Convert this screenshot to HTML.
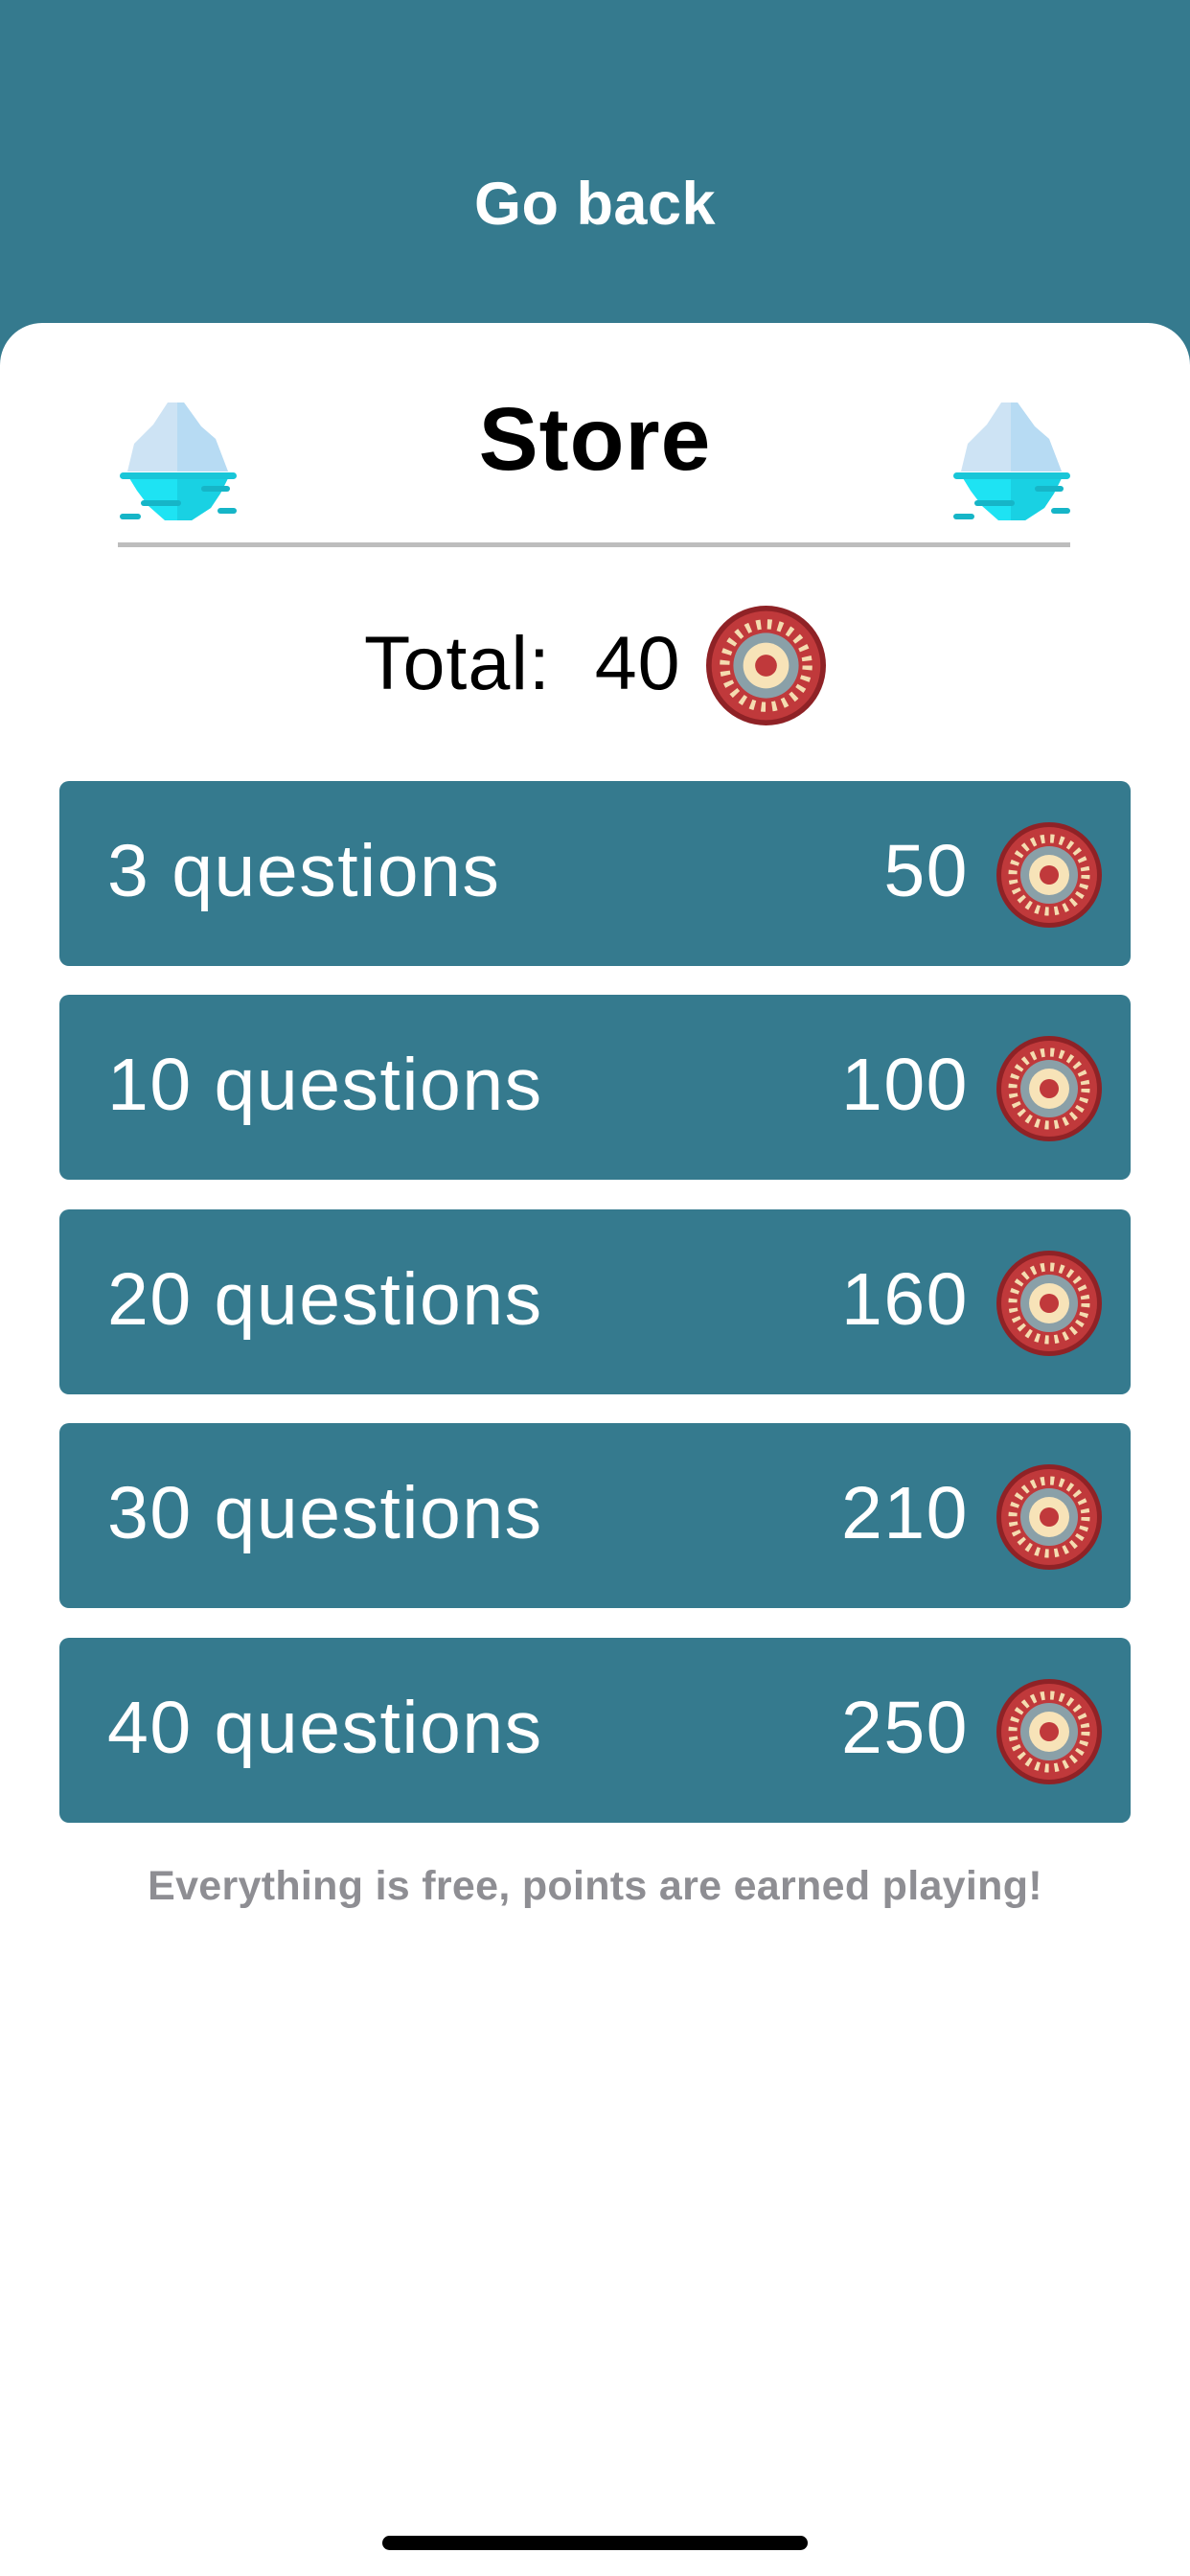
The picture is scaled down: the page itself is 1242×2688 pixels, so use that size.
<!DOCTYPE html>
<html><head><meta charset="utf-8"><style>
*{margin:0;padding:0;box-sizing:border-box}
body{width:1242px;height:2688px;background:#357a8e;position:relative;overflow:hidden;font-family:"Liberation Sans",sans-serif}
.hdr{position:absolute;top:0;left:0;width:1242px;height:345px;text-align:center;color:#fff;font-size:63px;font-weight:bold;line-height:62px;padding-top:182px;letter-spacing:0.5px}
.card{position:absolute;top:337px;left:0;width:1242px;height:2351px;background:#fff;border-radius:44px 44px 0 0}
.title{position:absolute;top:408px;left:0;width:1242px;text-align:center;font-size:93px;font-weight:bold;line-height:100px;color:#000;letter-spacing:1px}
.line{position:absolute;top:566px;left:123px;width:994px;height:5px;background:#bdbdbd}
.ice{position:absolute;width:150px;height:160px}
.total{position:absolute;top:652px;left:380px;font-size:79px;line-height:80px;color:#000;letter-spacing:1px}
.row{position:absolute;left:62px;width:1118px;height:193px;background:#357a8e;border-radius:10px;color:#fff;font-size:77px;letter-spacing:1.5px}
.row .l{position:absolute;left:50px;top:54px;line-height:80px}
.row .r{position:absolute;right:169px;top:54px;line-height:80px}
.row svg{position:absolute;left:978px;top:43px}
.foot{position:absolute;top:1944px;left:0;width:1242px;text-align:center;color:#8e8e93;font-size:43px;font-weight:bold;letter-spacing:0.3px}
.home{position:absolute;top:2646px;left:399px;width:444px;height:15px;border-radius:8px;background:#000}
</style></head><body>
<svg width="0" height="0" style="position:absolute"><defs>
<g id="coin">
<circle cx="55" cy="55" r="55" fill="#8f2226"/>
<circle cx="55" cy="55" r="50" fill="#c0393b"/>
<circle cx="55" cy="55" r="38" fill="none" stroke="#f4dcb0" stroke-width="9" stroke-dasharray="4 6"/>
<circle cx="55" cy="55" r="30" fill="#8aa0a8"/>
<circle cx="55" cy="55" r="21" fill="#f7e3b8"/>
<circle cx="55" cy="55" r="10" fill="#c0393b"/>
</g>
<g id="ice">
<path d="M65 20 L82 20 L100 45 L115 58 L128 92 L23 92 L30 63 L50 43 Z" fill="#cde3f4"/>
<path d="M75 20 L82 20 L100 45 L115 58 L128 92 L75 92 Z" fill="#b7dbf3"/>
<path d="M25 99 L128 99 L120 115 L110 130 L90 143 L62 143 L45 128 L33 112 Z" fill="#1ee3f3"/>
<path d="M75 99 L128 99 L120 115 L110 130 L90 143 L75 143 Z" fill="#19d1e3"/>
<rect x="15" y="93" width="122" height="7" rx="3.5" fill="#19c6d8"/>
<rect x="100" y="107" width="30" height="6" rx="3" fill="#16b5c7"/>
<rect x="37" y="122" width="42" height="6" rx="3" fill="#16b5c7"/>
<rect x="15" y="136" width="22" height="6" rx="3" fill="#16b5c7"/>
<rect x="117" y="130" width="20" height="6" rx="3" fill="#16b5c7"/>
</g>
</defs></svg>
<div class="hdr">Go back</div>
<div class="card"></div>
<div class="title">Store</div>
<svg class="ice" style="left:110px;top:400px" viewBox="0 0 150 160"><use href="#ice"/></svg>
<svg class="ice" style="left:980px;top:400px" viewBox="0 0 150 160"><use href="#ice"/></svg>
<div class="line"></div>
<div class="total">Total:&nbsp; 40</div>
<svg style="position:absolute;left:737px;top:632px" width="125" height="125" viewBox="0 0 110 110"><use href="#coin"/></svg>
<div class="row" style="top:815px"><span class="l">3 questions</span><span class="r">50</span><svg width="110" height="110"><use href="#coin"/></svg></div>
<div class="row" style="top:1038px"><span class="l">10 questions</span><span class="r">100</span><svg width="110" height="110"><use href="#coin"/></svg></div>
<div class="row" style="top:1262px"><span class="l">20 questions</span><span class="r">160</span><svg width="110" height="110"><use href="#coin"/></svg></div>
<div class="row" style="top:1485px"><span class="l">30 questions</span><span class="r">210</span><svg width="110" height="110"><use href="#coin"/></svg></div>
<div class="row" style="top:1709px"><span class="l">40 questions</span><span class="r">250</span><svg width="110" height="110"><use href="#coin"/></svg></div>
<div class="foot">Everything is free, points are earned playing!</div>
<div class="home"></div>
</body></html>
